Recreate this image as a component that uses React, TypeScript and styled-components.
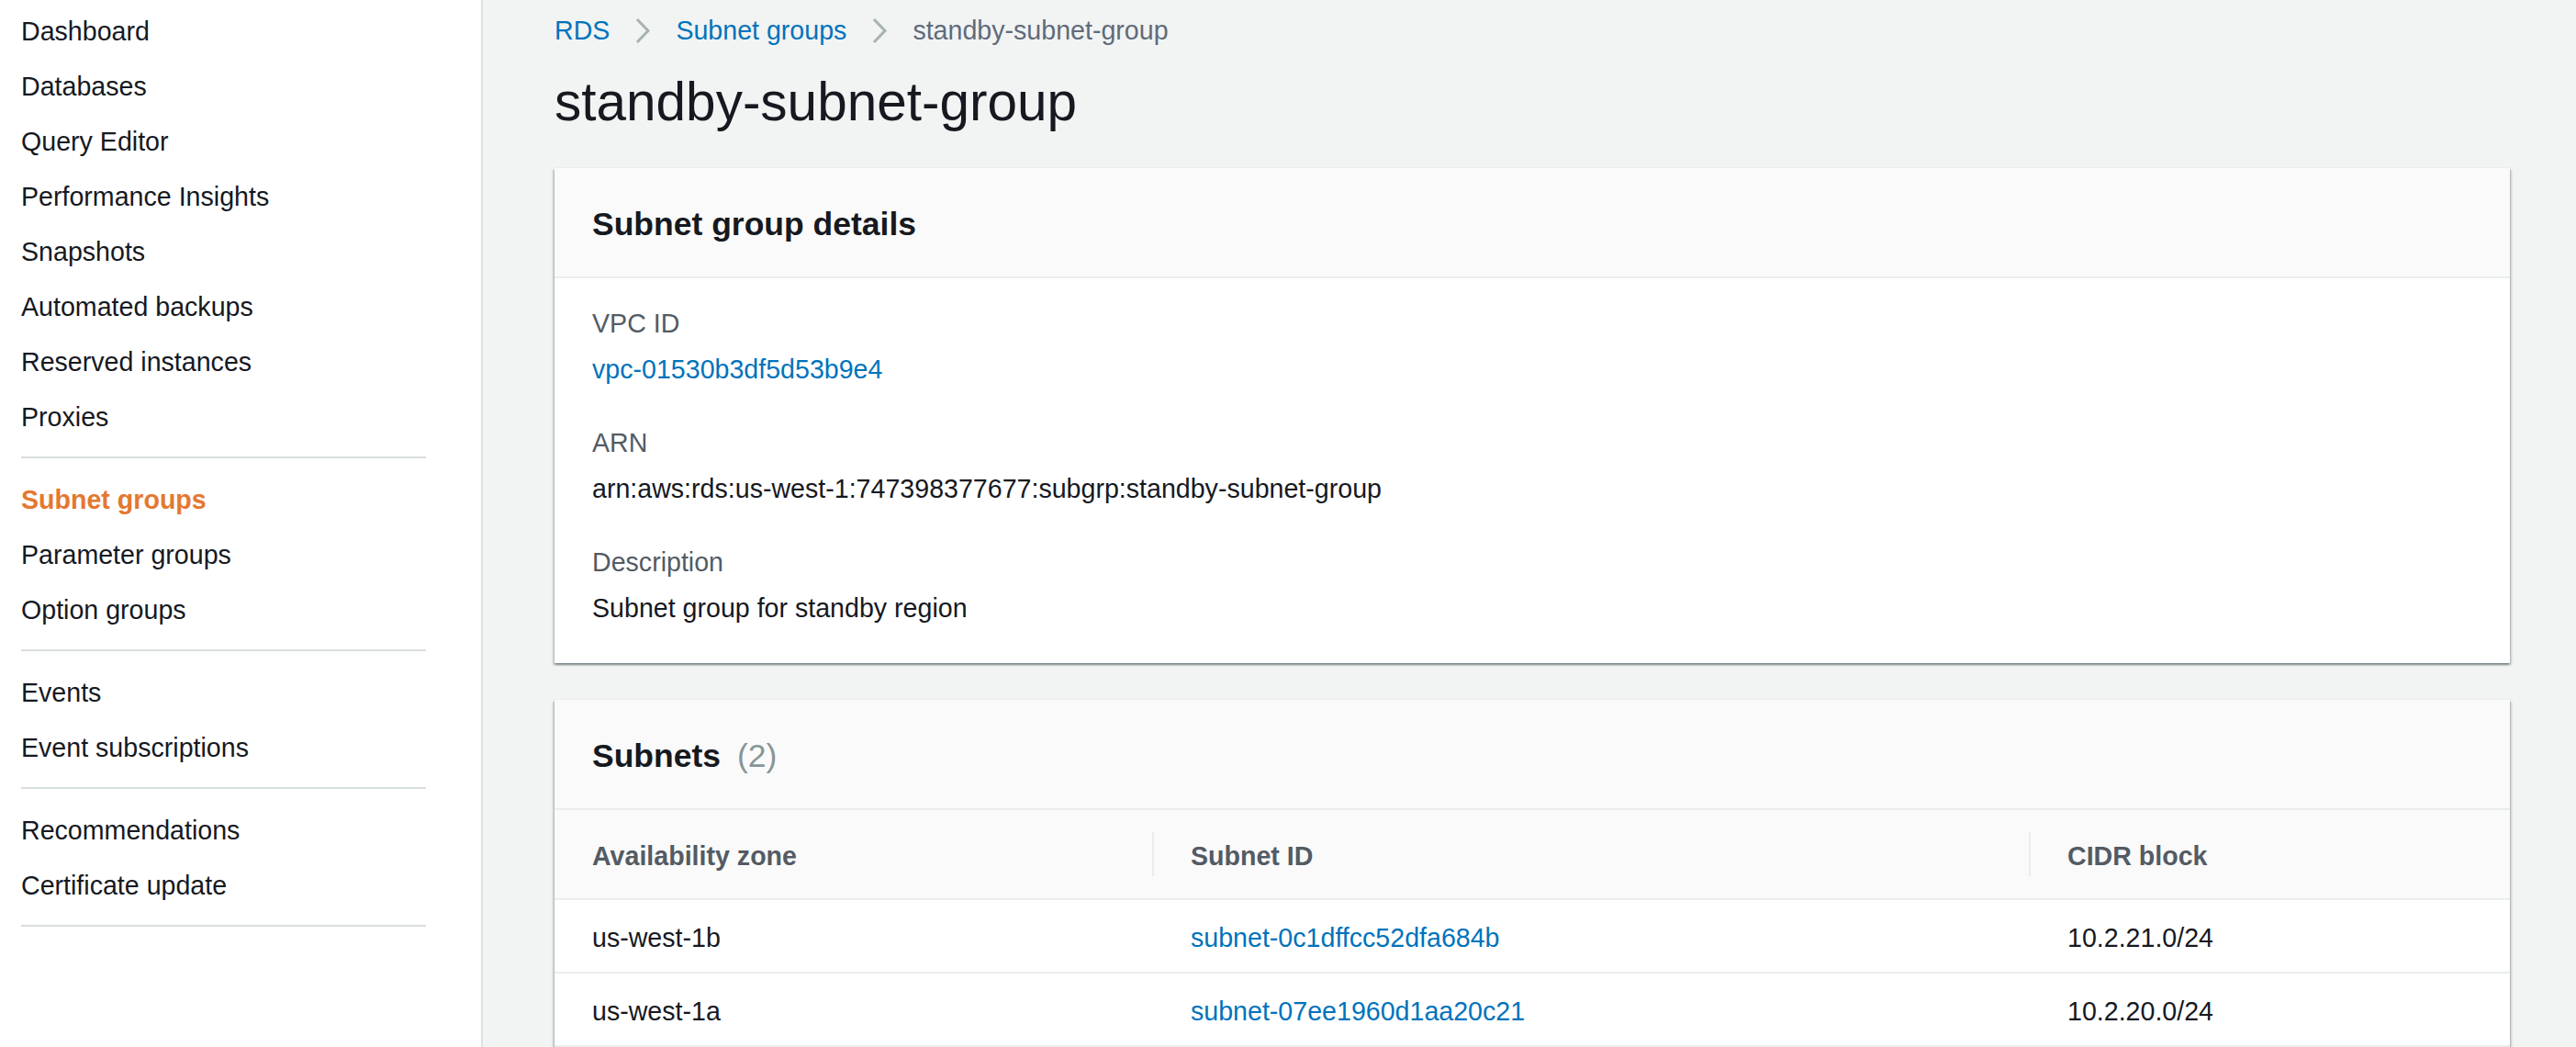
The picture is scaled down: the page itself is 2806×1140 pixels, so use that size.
import React from 'react';
import styled, { createGlobalStyle } from 'styled-components';

const GlobalStyle = createGlobalStyle`
  html, body { margin: 0; padding: 0; }
  body {
    background: #f2f3f3;
    font-family: "Liberation Sans", Arial, sans-serif;
    color: #16191f;
    -webkit-font-smoothing: antialiased;
  }
  * { box-sizing: border-box; }
`;

const Page = styled.div`
  display: flex;
  min-height: 100vh;
  width: 100%;
`;

const Sidebar = styled.nav`
  flex: 0 0 526px;
  width: 526px;
  background: #ffffff;
  border-right: 2px solid #dde1e1;
  padding: 4px 0 0 23px;
`;

const NavList = styled.ul`
  list-style: none;
  margin: 0;
  padding: 0;
`;

const NavItem = styled.li<{ $active?: boolean }>`
  height: 60px;
  line-height: 60px;
  font-size: 28.6px;
  white-space: nowrap;
  color: ${(p) => (p.$active ? '#e4782f' : '#16191f')};
  font-weight: ${(p) => (p.$active ? 700 : 400)};
`;

const NavDivider = styled.li`
  height: 2px;
  width: 441px;
  background: #d9dede;
  margin: 13px 0 15px;
`;

const Main = styled.main`
  flex: 1;
  min-width: 0;
  padding: 13px 72px 0 78px;
`;

const Breadcrumbs = styled.nav`
  display: flex;
  align-items: center;
  gap: 27px;
  height: 40px;
  font-size: 28.6px;
`;

const Crumb = styled.a`
  color: #0073bb;
  text-decoration: none;
`;

const CurrentCrumb = styled.span`
  color: #5f6b7a;
`;

const Chevron = styled.svg`
  width: 18px;
  height: 29px;
  flex: 0 0 auto;
`;

const Title = styled.h1`
  margin: 23px 0 37px;
  font-size: 58.5px;
  line-height: 70px;
  font-weight: 400;
  color: #16191f;
`;

const Card = styled.section`
  background: #ffffff;
  box-shadow: 0 2px 2px 0 rgba(0, 28, 36, 0.3), 2px 2px 2px 0 rgba(0, 28, 36, 0.15),
    -2px 2px 2px 0 rgba(0, 28, 36, 0.15), 0 0 1px 0 rgba(0, 28, 36, 0.2);
  & + & {
    margin-top: 40px;
  }
`;

const CardHeader = styled.header`
  height: 120px;
  display: flex;
  align-items: center;
  padding: 4px 41px 0;
  background: #fafafa;
  border-bottom: 2px solid #eaeded;
`;

const CardTitle = styled.h2`
  margin: 0;
  font-size: 35.5px;
  line-height: 44px;
  font-weight: 700;
  color: #16191f;
`;

const Count = styled.span`
  color: #879596;
  font-weight: 400;
  margin-left: 18px;
`;

const CardBody = styled.div`
  padding: 29px 41px 40px;
  display: flex;
  flex-direction: column;
  gap: 40px;
`;

const Field = styled.div`
  display: flex;
  flex-direction: column;
  gap: 10px;
`;

const Label = styled.div`
  font-size: 28.6px;
  line-height: 40px;
  color: #545b64;
`;

const Value = styled.div`
  font-size: 28.6px;
  line-height: 40px;
  color: #16191f;
`;

const Link = styled.a`
  color: #0073bb;
  text-decoration: none;
`;

const Table = styled.div`
  display: grid;
  grid-template-columns: 651px 955px 1fr;
`;

const HeadCell = styled.div<{ $first?: boolean }>`
  height: 98px;
  display: flex;
  align-items: center;
  padding-left: ${(p) => (p.$first ? '41px' : '0')};
  padding-top: 4px;
  background: #fafafa;
  border-bottom: 2px solid #eaeded;
  font-size: 28.6px;
  font-weight: 700;
  color: #545b64;
`;

const ColSep = styled.span`
  width: 2px;
  height: 48px;
  background: #eaeded;
  margin-right: 40px;
  margin-top: -4px;
`;

const BodyCell = styled.div<{ $first?: boolean }>`
  height: 80px;
  display: flex;
  align-items: center;
  padding-left: ${(p) => (p.$first ? '41px' : '42px')};
  padding-top: 5px;
  border-bottom: 2px solid #eaeded;
  font-size: 28.6px;
  color: #16191f;
  white-space: nowrap;
`;

const ChevronIcon = () => (
  <Chevron viewBox="0 0 18 29" aria-hidden="true">
    <polyline points="3,2 15,14.5 3,27" fill="none" stroke="#a7b2b3" strokeWidth="3" />
  </Chevron>
);

const navGroups: string[][] = [
  [
    'Dashboard',
    'Databases',
    'Query Editor',
    'Performance Insights',
    'Snapshots',
    'Automated backups',
    'Reserved instances',
    'Proxies',
  ],
  ['Subnet groups', 'Parameter groups', 'Option groups'],
  ['Events', 'Event subscriptions'],
  ['Recommendations', 'Certificate update'],
];

const subnets = [
  { az: 'us-west-1b', id: 'subnet-0c1dffcc52dfa684b', cidr: '10.2.21.0/24' },
  { az: 'us-west-1a', id: 'subnet-07ee1960d1aa20c21', cidr: '10.2.20.0/24' },
];

export default function App() {
  return (
    <>
      <GlobalStyle />
      <Page>
        <Sidebar>
          <NavList>
            {navGroups.map((group, gi) => (
              <React.Fragment key={gi}>
                {group.map((item) => (
                  <NavItem key={item} $active={item === 'Subnet groups'}>
                    {item}
                  </NavItem>
                ))}
                <NavDivider />
              </React.Fragment>
            ))}
          </NavList>
        </Sidebar>
        <Main>
          <Breadcrumbs>
            <Crumb href="#">RDS</Crumb>
            <ChevronIcon />
            <Crumb href="#">Subnet groups</Crumb>
            <ChevronIcon />
            <CurrentCrumb>standby-subnet-group</CurrentCrumb>
          </Breadcrumbs>
          <Title>standby-subnet-group</Title>

          <Card>
            <CardHeader>
              <CardTitle>Subnet group details</CardTitle>
            </CardHeader>
            <CardBody>
              <Field>
                <Label>VPC ID</Label>
                <Value>
                  <Link href="#">vpc-01530b3df5d53b9e4</Link>
                </Value>
              </Field>
              <Field>
                <Label>ARN</Label>
                <Value>arn:aws:rds:us-west-1:747398377677:subgrp:standby-subnet-group</Value>
              </Field>
              <Field>
                <Label>Description</Label>
                <Value>Subnet group for standby region</Value>
              </Field>
            </CardBody>
          </Card>

          <Card>
            <CardHeader>
              <CardTitle>
                Subnets<Count>(2)</Count>
              </CardTitle>
            </CardHeader>
            <Table>
              <HeadCell $first>Availability zone</HeadCell>
              <HeadCell>
                <ColSep />
                Subnet ID
              </HeadCell>
              <HeadCell>
                <ColSep />
                CIDR block
              </HeadCell>
              {subnets.map((s) => (
                <React.Fragment key={s.id}>
                  <BodyCell $first>{s.az}</BodyCell>
                  <BodyCell>
                    <Link href="#">{s.id}</Link>
                  </BodyCell>
                  <BodyCell>{s.cidr}</BodyCell>
                </React.Fragment>
              ))}
            </Table>
          </Card>
        </Main>
      </Page>
    </>
  );
}
